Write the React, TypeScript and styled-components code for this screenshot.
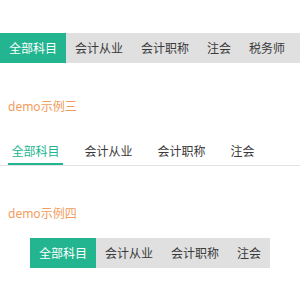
import React, { useState } from "react";
import styled, { createGlobalStyle, css } from "styled-components";

const GlobalStyle = createGlobalStyle`
  html, body {
    margin: 0;
    padding: 0;
    background: #ffffff;
    font-family: "Noto Sans", "Noto Sans CJK SC", sans-serif;
  }
`;

const Page = styled.div`
  width: 300px;
  height: 300px;
  overflow: hidden;
  padding-top: 33px;
  box-sizing: border-box;
`;

const DemoTitle = styled.div<{ $top: number }>`
  margin: ${(p) => p.$top}px 0 0 8px;
  font-size: 12px;
  line-height: 16px;
  color: #f29c5c;
`;

const BlockBar = styled.div<{ $centered?: boolean }>`
  display: flex;
  height: 30px;
  background: #e0e0e0;
  white-space: nowrap;
  ${(p) =>
    p.$centered &&
    css`
      width: max-content;
      margin: 16px auto 0;
    `}
`;

const BlockItem = styled.div<{ $active: boolean }>`
  display: flex;
  align-items: center;
  padding: 0 9px;
  font-size: 12px;
  color: ${(p) => (p.$active ? "#ffffff" : "#3a3a3a")};
  background: ${(p) => (p.$active ? "#22b58f" : "transparent")};
  cursor: pointer;
`;

const LineBar = styled.div`
  display: flex;
  gap: 18px;
  margin-top: 24px;
  padding-left: 8px;
  border-bottom: 1px solid #e3e3e3;
`;

const LineItem = styled.div<{ $active: boolean }>`
  height: 26px;
  line-height: 26px;
  padding: 0 3.5px;
  font-size: 12px;
  box-sizing: border-box;
  color: ${(p) => (p.$active ? "#22b58f" : "#3a3a3a")};
  border-bottom: 2px solid ${(p) => (p.$active ? "#22b58f" : "transparent")};
  cursor: pointer;
`;

const allTabs = ["全部科目", "会计从业", "会计职称", "注会", "税务师"];
const shortTabs = ["全部科目", "会计从业", "会计职称", "注会"];

export default function App() {
  const [a, setA] = useState(0);
  const [b, setB] = useState(0);
  const [c, setC] = useState(0);
  return (
    <>
      <GlobalStyle />
      <Page>
        <BlockBar>
          {allTabs.map((t, i) => (
            <BlockItem key={t} $active={a === i} onClick={() => setA(i)}>
              {t}
            </BlockItem>
          ))}
        </BlockBar>

        <DemoTitle $top={36}>demo示例三</DemoTitle>
        <LineBar>
          {shortTabs.map((t, i) => (
            <LineItem key={t} $active={b === i} onClick={() => setB(i)}>
              {t}
            </LineItem>
          ))}
        </LineBar>

        <DemoTitle $top={40}>demo示例四</DemoTitle>
        <BlockBar $centered>
          {shortTabs.map((t, i) => (
            <BlockItem key={t} $active={c === i} onClick={() => setC(i)}>
              {t}
            </BlockItem>
          ))}
        </BlockBar>
      </Page>
    </>
  );
}
